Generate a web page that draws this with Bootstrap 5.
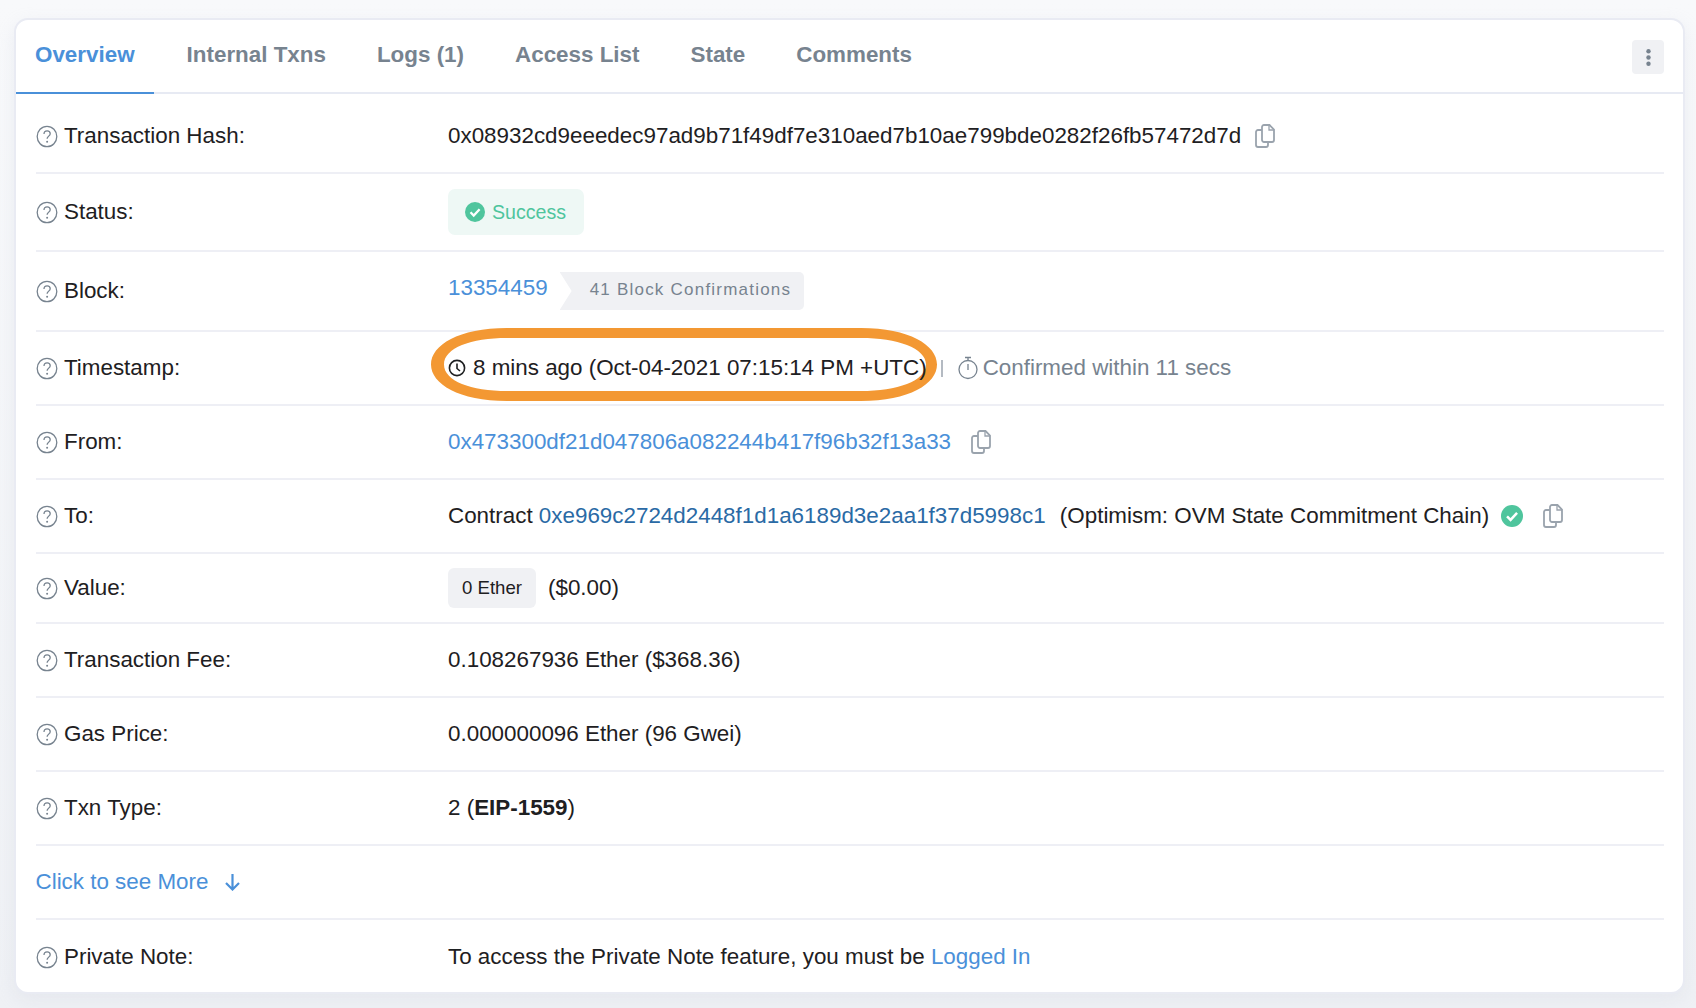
<!DOCTYPE html>
<html lang="en">
<head>
  <meta charset="UTF-8" />
  <meta name="viewport" content="width=device-width, initial-scale=1.0" />
  <title>Transaction Details</title>
  <link href="https://cdn.jsdelivr.net/npm/bootstrap@5.3.0/dist/css/bootstrap.min.css" rel="stylesheet">
  <style>
    body {
      font-family: "Liberation Sans", Arial, sans-serif;
      font-size: 22.4px;
      color: #1e2022;
      background: linear-gradient(#f8f9fb, #eff1f5);
      height: 1008px;
      overflow: hidden;
    }
    a { text-decoration: none; color: #4a90d9; }

    .txn-card {
      margin: 18px 11px 0 14px;
      height: 976px;
      border: 2px solid #e9ebf3;
      border-radius: 14px;
      box-shadow: 0 6px 18px rgba(189, 197, 209, .2);
      overflow: hidden;
    }

    /* tabs */
    .txn-tabs { flex: none; height: 74px; border-bottom: 2px solid #e7eaf3; padding-right: 19px; }
    .txn-tabs .nav-link {
      height: 74px;
      padding: 18px 19px 0;
      margin-right: 13px;
      font-weight: 700;
      color: #77838f;
    }
    .txn-tabs .nav-link:not(.active) { position: relative; left: 1px; }
    .txn-tabs .nav-link.active { color: #4a90d9; border-bottom: 2px solid #4a90d9; }
    .kebab {
      width: 32px; height: 34px; padding: 0;
      margin-top: 20px;
      background: #f0f1f4;
      border: 0; border-radius: 4px;
    }

    /* rows */
    .txn-row { flex: none; height: 74px; margin: 0 19px 0 19.500px; border-bottom: 2px solid #eeeff5; line-height: 1; }
    .row-80 { height: 80px; }
    .row-78 { height: 78px; }
    .row-70 { height: 70px; }
    .row-hash { padding-top: 6px; }
    .row-last { border-bottom: 0; }
    .txn-label { width: 412.500px; flex: none; }
    .help-icon { width: 22px; height: 23px; margin-right: 6.500px; color: #77838f; }
    .copy-icon { width: 20px; height: 24px; color: #9aa3ad; margin-left: 14px; flex: none; }
    .copy-wide { margin-left: 20px; }
    .verified-icon { margin-left: 12px; color: #4fc59d; }
    .muted-text { color: #77838f; margin-left: 5px; }
    .dark-link { color: #2a6aa5; }

    .status-pill {
      height: 46px; width: 136px;
      padding-left: 17px;
      padding-top: 2px;
      background: #eef8f5;
      color: #4fc59d;
      border-radius: 7px;
      font-size: 19.6px;
    }
    .status-pill svg { margin-top: -2px; margin-right: -1px; }
    .block-num { margin-bottom: 5px; }
    .confirm-tag {
      height: 38px;
      margin: 0 0 0 12px;
      padding: 0 13px 4px 30px;
      background: #f0f1f4;
      color: #77838f;
      font-size: 17px;
      letter-spacing: 1.220px;
      border-radius: 0 5px 5px 0;
      clip-path: polygon(0 0, 100% 0, 100% 100%, 0 100%, 12px 50%);
    }
    .ether-tag {
      height: 40px; width: 88px;
      background: #f0f1f4;
      border-radius: 6px;
      font-size: 18.6px;
    }
    .time-divider { width: 2px; height: 17px; background: #b4bac2; margin: 0 15px 0 14px; }

    /* hand drawn highlight round the timestamp */
    .row-time { position: relative; }
    .time-value { position: relative; z-index: 1; }
    .time-text { margin-left: 7px; }
    .highlight {
      position: absolute;
      left: 395px; top: -4px;
      width: 506px; height: 73px;
      color: #f39833;
      pointer-events: none;
    }
  </style>
</head>
<body>
  <svg width="0" height="0" class="position-absolute">
    <symbol id="i-help" viewBox="0 0 22 23">
      <ellipse cx="11" cy="11.5" rx="9.8" ry="10.2" fill="none" stroke="currentColor" stroke-width="1.3"/>
      <path d="M8 9c0-2 1.4-3.2 3.1-3.2S14.200 7 14.200 8.700c0 2.300-3.100 2.600-3.100 5.100" fill="none" stroke="currentColor" stroke-width="1.3"/>
      <circle cx="11.100" cy="16.800" r="1" fill="currentColor"/>
    </symbol>
    <symbol id="i-copy" viewBox="0 0 20 24">
      <path d="M7 3a2 2 0 0 1 2-2h5.500L19 5.500V16a2 2 0 0 1-2 2H9a2 2 0 0 1-2-2Z" fill="none" stroke="currentColor" stroke-width="1.800"/>
      <path d="M14 1v5h5" fill="none" stroke="currentColor" stroke-width="1.300"/>
      <path d="M7 6H3a2 2 0 0 0-2 2v13a2 2 0 0 0 2 2h8a2 2 0 0 0 2-2v-3" fill="none" stroke="currentColor" stroke-width="1.800"/>
    </symbol>
    <symbol id="i-check" viewBox="0 0 20 20">
      <circle cx="10" cy="10" r="10" fill="currentColor"/>
      <path d="M5.500 10.300l3.200 3.200 5.900-6.300" fill="none" stroke="#fff" stroke-width="2.300"/>
    </symbol>
  </svg>

  <div class="card txn-card">
    <div class="d-flex align-items-start justify-content-between txn-tabs">
      <ul class="nav">
        <li class="nav-item"><a class="nav-link active" href="#">Overview</a></li>
        <li class="nav-item"><a class="nav-link" href="#">Internal Txns</a></li>
        <li class="nav-item"><a class="nav-link" href="#">Logs (1)</a></li>
        <li class="nav-item"><a class="nav-link" href="#">Access List</a></li>
        <li class="nav-item"><a class="nav-link" href="#">State</a></li>
        <li class="nav-item"><a class="nav-link" href="#">Comments</a></li>
      </ul>
      <button class="btn kebab d-flex align-items-center justify-content-center" type="button" aria-label="More">
        <svg width="5" height="17" viewBox="0 0 5 17" fill="#77838f"><circle cx="2.500" cy="2.300" r="2.200"/><circle cx="2.500" cy="8.500" r="2.200"/><circle cx="2.500" cy="14.700" r="2.200"/></svg>
      </button>
    </div>

    <div class="d-flex align-items-center txn-row row-80 row-hash">
      <div class="txn-label d-flex align-items-center"><svg class="help-icon"><use href="#i-help"/></svg>Transaction Hash:</div>
      <div class="d-flex align-items-center">0x08932cd9eeedec97ad9b71f49df7e310aed7b10ae799bde0282f26fb57472d7d<svg class="copy-icon"><use href="#i-copy"/></svg></div>
    </div>

    <div class="d-flex align-items-center txn-row row-78">
      <div class="txn-label d-flex align-items-center"><svg class="help-icon"><use href="#i-help"/></svg>Status:</div>
      <div class="status-pill d-flex align-items-center gap-2"><svg width="20" height="20"><use href="#i-check"/></svg>Success</div>
    </div>

    <div class="d-flex align-items-center txn-row row-80">
      <div class="txn-label d-flex align-items-center"><svg class="help-icon"><use href="#i-help"/></svg>Block:</div>
      <div class="d-flex align-items-center">
        <a class="block-num" href="#">13354459</a>
        <span class="confirm-tag d-inline-flex align-items-center">41 Block Confirmations</span>
      </div>
    </div>

    <div class="d-flex align-items-center txn-row row-time">
      <div class="txn-label d-flex align-items-center"><svg class="help-icon"><use href="#i-help"/></svg>Timestamp:</div>
      <div class="d-flex align-items-center time-value">
        <svg width="18" height="18" viewBox="0 0 18 18" fill="none" stroke="#1e2022" stroke-width="1.600"><circle cx="9" cy="9" r="7.600"/><path d="M9 4.500V9.500l3 2.500"/></svg>
        <span class="time-text">8 mins ago (Oct-04-2021 07:15:14 PM +UTC)</span>
        <span class="time-divider"></span>
        <svg width="20" height="24" viewBox="0 0 20 24" fill="none" stroke="#77838f" stroke-width="1.300"><circle cx="10" cy="13.500" r="9"/><path d="M7 1.500h6M10 2v3M10 8v6"/></svg>
        <span class="muted-text">Confirmed within 11 secs</span>
      </div>
      <svg class="highlight" viewBox="0 0 506 73"><path fill="currentColor" fill-rule="evenodd" d="M76 0H430C478 0 506 17 506 36.500S478 73 430 73H76C28 73 0 56 0 36.500S28 0 76 0ZM76 10C40 10 13 20 13 36.500S40 63 76 63H430C466 63 495 53 495 36.500S466 10 430 10Z"/></svg>
    </div>

    <div class="d-flex align-items-center txn-row">
      <div class="txn-label d-flex align-items-center"><svg class="help-icon"><use href="#i-help"/></svg>From:</div>
      <div class="d-flex align-items-center"><a href="#">0x473300df21d047806a082244b417f96b32f13a33</a><svg class="copy-icon copy-wide"><use href="#i-copy"/></svg></div>
    </div>

    <div class="d-flex align-items-center txn-row">
      <div class="txn-label d-flex align-items-center"><svg class="help-icon"><use href="#i-help"/></svg>To:</div>
      <div class="d-flex align-items-center">
        <span>Contract&nbsp;</span><a class="dark-link" href="#">0xe969c2724d2448f1d1a6189d3e2aa1f37d5998c1</a>
        <span class="ms-2">&nbsp;(Optimism: OVM State Commitment Chain)</span>
        <svg class="verified-icon" width="22" height="22"><use href="#i-check"/></svg>
        <svg class="copy-icon copy-wide"><use href="#i-copy"/></svg>
      </div>
    </div>

    <div class="d-flex align-items-center txn-row row-70">
      <div class="txn-label d-flex align-items-center"><svg class="help-icon"><use href="#i-help"/></svg>Value:</div>
      <div class="d-flex align-items-center">
        <span class="ether-tag d-inline-flex align-items-center justify-content-center">0 Ether</span>
        <span class="ms-2 ps-1">($0.00)</span>
      </div>
    </div>

    <div class="d-flex align-items-center txn-row">
      <div class="txn-label d-flex align-items-center"><svg class="help-icon"><use href="#i-help"/></svg>Transaction Fee:</div>
      <div>0.108267936 Ether ($368.36)</div>
    </div>

    <div class="d-flex align-items-center txn-row">
      <div class="txn-label d-flex align-items-center"><svg class="help-icon"><use href="#i-help"/></svg>Gas Price:</div>
      <div>0.000000096 Ether (96 Gwei)</div>
    </div>

    <div class="d-flex align-items-center txn-row">
      <div class="txn-label d-flex align-items-center"><svg class="help-icon"><use href="#i-help"/></svg>Txn Type:</div>
      <div>2 (<strong>EIP-1559</strong>)</div>
    </div>

    <div class="d-flex align-items-center txn-row">
      <a class="d-flex align-items-center" href="#">Click to see More
        <svg class="ms-3" width="17" height="18" viewBox="0 0 17 18" fill="none" stroke="#4a90d9" stroke-width="2.200"><path d="M8.500 1v15M2 10l6.500 6.500L15 10"/></svg>
      </a>
    </div>

    <div class="d-flex align-items-center txn-row row-last">
      <div class="txn-label d-flex align-items-center"><svg class="help-icon"><use href="#i-help"/></svg>Private Note:</div>
      <div>To access the Private Note feature, you must be <a href="#">Logged In</a></div>
    </div>
  </div>

  <script src="https://cdn.jsdelivr.net/npm/bootstrap@5.3.0/dist/js/bootstrap.bundle.min.js"></script>
</body>
</html>
